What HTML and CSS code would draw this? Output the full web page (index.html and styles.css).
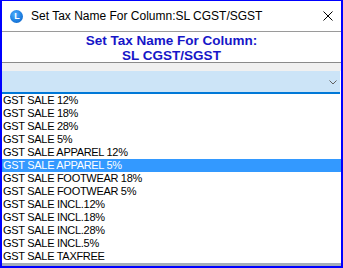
FILE: index.html
```html
<!DOCTYPE html>
<html>
<head>
<meta charset="utf-8">
<link rel="stylesheet" href="styles.css">
</head>
<body>
<div class="window">
  <div class="titlebar">
    <span class="app-icon"><span class="app-letter">L</span></span>
    <span class="title">Set Tax Name For Column:SL CGST/SGST</span>
    <svg class="close" width="10" height="10" viewBox="0 0 10 10"><path d="M0.5 0.5 L9.5 9.5 M9.5 0.5 L0.5 9.5" stroke="#000" stroke-width="1" fill="none"/></svg>
  </div>
  <div class="heading">Set Tax Name For Column:<br>SL CGST/SGST</div>
  <div class="spacer"></div>
  <div class="combo">
    <svg class="chev" width="8" height="5" viewBox="0 0 8 5"><path d="M0.5 0.5 L4 4 L7.5 0.5" stroke="#606060" stroke-width="1" fill="none"/></svg>
  </div>
  <ul class="list">
    <li>GST SALE 12%</li>
    <li>GST SALE 18%</li>
    <li>GST SALE 28%</li>
    <li>GST SALE 5%</li>
    <li>GST SALE APPAREL 12%</li>
    <li class="sel">GST SALE APPAREL 5%</li>
    <li>GST SALE FOOTWEAR 18%</li>
    <li>GST SALE FOOTWEAR 5%</li>
    <li>GST SALE INCL.12%</li>
    <li>GST SALE INCL.18%</li>
    <li>GST SALE INCL.28%</li>
    <li>GST SALE INCL.5%</li>
    <li>GST SALE TAXFREE</li>
  </ul>
</div>
</body>
</html>
```

FILE: styles.css
```css
html, body {
  margin: 0;
  padding: 0;
  background: #fff;
}
.window {
  box-sizing: border-box;
  width: 343px;
  height: 268px;
  border: 2px solid #0000ff;
  border-top-width: 1px;
  display: flex;
  flex-direction: column;
  overflow: hidden;
  font-family: "Liberation Sans", Arial, sans-serif;
}
.titlebar {
  height: 30px;
  flex: none;
  display: flex;
  align-items: center;
  border-bottom: 1px solid #9a9a9a;
  background: #fff;
}
.app-icon {
  width: 13px;
  height: 13px;
  border-radius: 50%;
  margin-left: 8px;
  margin-top: 0px;
  background: radial-gradient(circle at 40% 35%, #4fb0ff 0%, #1e7fe0 55%, #0a5cc0 100%);
  display: flex;
  align-items: center;
  justify-content: center;
  flex: none;
}
.app-letter {
  color: #fff;
  font-weight: bold;
  font-size: 9px;
  line-height: 9px;
  margin-left: 1px;
}
.title {
  margin-left: 8px;
  font-size: 12px;
  color: #000;
  flex: 1;
  white-space: nowrap;
}
.close {
  margin-right: 8px;
  flex: none;
}
.heading {
  height: 29px;
  padding-top: 1px;
  flex: none;
  text-align: center;
  font-weight: bold;
  font-size: 13.5px;
  line-height: 15px;
  color: #1616c8;
  border-bottom: 1px solid #8a8a8a;
}
.spacer {
  height: 8px;
  flex: none;
  background: #f0f0f0;
}
.combo {
  height: 21px;
  flex: none;
  background: #cce4f7;
  border-bottom: 2px solid #0078d7;
  margin-right: 1px;
  display: flex;
  align-items: center;
  justify-content: flex-end;
}
.chev {
  margin-right: 3px;
  margin-top: 2px;
}
.list {
  list-style: none;
  margin: 0;
  padding: 0;
  flex: none;
  height: 169px;
  border-bottom: 3px solid #a3adb8;
}
.list li {
  height: 13px;
  line-height: 13px;
  font-size: 11px;
  letter-spacing: -0.3px;
  padding-left: 1px;
  color: #000;
  white-space: nowrap;
}
.list li.sel {
  background: #3399ff;
  color: #fff;
}
```
